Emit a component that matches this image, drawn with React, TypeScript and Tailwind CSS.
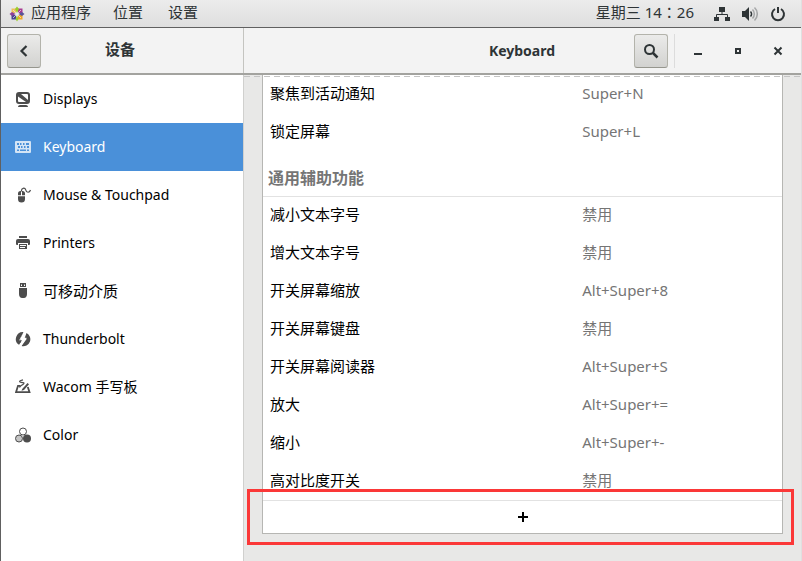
import React, { useState } from 'react';

const iconClass = 'h-4 w-4 shrink-0';

function DisplaysIcon() {
  return (
    <svg viewBox="0 0 16 16" className={iconClass} aria-hidden="true">
      <path
        fill="currentColor"
        fillRule="evenodd"
        d="M4 1h8a3 3 0 0 1 3 3v6a3 3 0 0 1-3 3H4a3 3 0 0 1-3-3V4a3 3 0 0 1 3-3zm0 2a1 1 0 0 0-1 1v6a1 1 0 0 0 1 1h8a1 1 0 0 0 1-1V4a1 1 0 0 0-1-1z"
      />
      <path d="M3 3h3l7 6v2h-2L3 5.500z" fill="currentColor" />
      <path d="M3 16c0-1.300 1-2 2-2h6c1 0 2 .7 2 2z" fill="currentColor" />
    </svg>
  );
}

function KeyboardIcon() {
  return (
    <svg viewBox="0 0 16 16" className={iconClass} aria-hidden="true">
      <path
        fill="currentColor"
        fillRule="evenodd"
        d="M1 2h14a1 1 0 0 1 1 1v10a1 1 0 0 1-1 1H1a1 1 0 0 1-1-1V3a1 1 0 0 1 1-1zm1 2v2h2V4zm3 0v2h1.500V4zm3 0v2h1.500V4zm3 0v2h3V4zM3 7v2h2V7zm3 0v2h1.500V7zm3 0v2h1.500V7zm3 0v2h2V7zM2 10.500v1.500h2v-1.500zm3 0v1.500h6v-1.500zm7 0v1.500h2v-1.500z"
      />
    </svg>
  );
}

function MouseIcon() {
  return (
    <svg viewBox="0 0 16 16" className={iconClass} aria-hidden="true">
      <path
        fill="currentColor"
        d="M3 8.300V6.500A2.500 2.500 0 0 1 5.500 4H6v4.300zM7 8.300V4h.5A2.500 2.500 0 0 1 10 6.500v1.800zM3 9.200h7V12a3.500 3.500 0 0 1-7 0z"
      />
      <path
        d="M6.500 4.500C6 .5 10 .5 10.700 2.800 11.500 6 14.500 6 15.500 3"
        fill="none"
        stroke="currentColor"
        strokeWidth="1.200"
      />
    </svg>
  );
}

function PrinterIcon() {
  return (
    <svg viewBox="0 0 16 16" className={iconClass} aria-hidden="true">
      <path fill="currentColor" d="M4 1h8v2H4z" />
      <path
        fill="currentColor"
        d="M3 4h10a2 2 0 0 1 2 2v3a1 1 0 0 1-1 1h-1V8H3v2H2a1 1 0 0 1-1-1V6a2 2 0 0 1 2-2z"
      />
      <path fill="currentColor" fillRule="evenodd" d="M4 9h8v5H4zm1 1v1h6v-1zm0 2v1h5v-1z" />
    </svg>
  );
}

function RemovableIcon() {
  return (
    <svg viewBox="0 0 16 16" className={iconClass} aria-hidden="true">
      <path fill="currentColor" fillRule="evenodd" d="M5 0h6v4H5zm1 1.500v1.500h1V1.500zm3 0v1.500h1V1.500z" />
      <path fill="currentColor" d="M4 5h8v6c0 2.500-1.500 4-3 4H7c-1.500 0-3-1.500-3-4z" />
    </svg>
  );
}

function ThunderboltIcon() {
  return (
    <svg viewBox="0 0 16 16" className={iconClass} aria-hidden="true">
      <path fill="currentColor" d="M8.500 1A7 7 0 0 0 4 13.800L6.800 9.500H4z" />
      <path fill="currentColor" d="M6.500 14.900 12 7.500H9.500L11.500 1.900A7 7 0 0 1 6.500 14.900z" />
      <path fill="currentColor" d="M8.500 1 4 9.500h2.800L4 13.800z" />
      <path fill="#fff" d="M9 1 4.500 8.800h3L4.500 15l1.500.5L11.500 6.800H8.800L11 1.200z" />
    </svg>
  );
}

function WacomIcon() {
  return (
    <svg viewBox="0 0 16 16" className={iconClass} aria-hidden="true">
      <path d="M5.500 6.800H3L1 13.200h13.500L12.800 8" fill="none" stroke="currentColor" strokeWidth="1.800" />
      <path fill="currentColor" d="m12.500 4 1.500 1.200L9 11l-2.500.8L7.200 10z" />
      <path d="M8 .8C4.500 1.500 3.500 3 6 3.300s4 .5 2.200 1.900S5 6.800 4.500 8.500" fill="none" stroke="currentColor" strokeWidth="1.200" />
    </svg>
  );
}

function ColorIcon() {
  return (
    <svg viewBox="0 0 16 16" className={iconClass} aria-hidden="true">
      <circle cx="8" cy="4.500" r="3.500" fill="none" stroke="currentColor" />
      <circle cx="4" cy="11.500" r="3.500" fill="#c4c4c4" stroke="currentColor" />
      <circle cx="12" cy="11.500" r="4" fill="currentColor" />
    </svg>
  );
}

// Pinwheel of coloured squares with four outer tips
function DistroLogo() {
  return (
    <svg viewBox="0 0 16 16" className={iconClass} aria-hidden="true">
      <path fill="#efc05a" d="M2.500 2.500H7V7H2.500z" />
      <path fill="#a83a92" d="M9 2.500h4.500V7H9z" />
      <path fill="#4a4590" d="M2.500 9H7v4.500H2.500z" />
      <path fill="#efa724" d="M9 9h4.500v4.500H9z" />
      <path fill="#9ccd2a" d="m8 .5 2 2.500-2 4-2-4zM8 15.500 6.500 13 8 9.500 9.500 13z" />
      <path fill="#8d3f97" d="m.5 8 2.500-2 3.500 2L3 10z" />
      <path fill="#5a5599" d="M15.500 8 13 6 9.500 8l3.500 2z" />
      <path stroke="#eee" strokeWidth="0.700" d="m4 4 8 8M12 4l-8 8" />
      <circle cx="8" cy="8" r="1" fill="#eee" />
    </svg>
  );
}

const panels = [
  { name: 'Displays', size: 'text-sm', Icon: DisplaysIcon },
  { name: 'Keyboard', size: 'text-sm', Icon: KeyboardIcon },
  { name: 'Mouse & Touchpad', size: 'text-sm', Icon: MouseIcon },
  { name: 'Printers', size: 'text-sm', Icon: PrinterIcon },
  { name: '可移动介质', size: 'text-[15px]', Icon: RemovableIcon },
  { name: 'Thunderbolt', size: 'text-sm', Icon: ThunderboltIcon },
  { name: 'Wacom 手写板', size: 'text-sm', Icon: WacomIcon },
  { name: 'Color', size: 'text-sm', Icon: ColorIcon },
];

const systemShortcuts = [
  { action: '聚焦到活动通知', keys: 'Super+N' },
  { action: '锁定屏幕', keys: 'Super+L' },
];

const accessShortcuts = [
  { action: '减小文本字号', keys: '禁用' },
  { action: '增大文本字号', keys: '禁用' },
  { action: '开关屏幕缩放', keys: 'Alt+Super+8' },
  { action: '开关屏幕键盘', keys: '禁用' },
  { action: '开关屏幕阅读器', keys: 'Alt+Super+S' },
  { action: '放大', keys: 'Alt+Super+=' },
  { action: '缩小', keys: 'Alt+Super+-' },
  { action: '高对比度开关', keys: '禁用' },
];

function ShortcutRow({ action, keys }: { action: string; keys: string }) {
  return (
    <tr className="h-[38px]">
      <td className="w-[61.5%] pb-0.5 pl-[7px] text-[15px] text-black">{action}</td>
      <td className="pb-0.5 text-[15px] text-[#757575]">{keys}</td>
    </tr>
  );
}

function TopBar() {
  return (
    <div className="flex h-7 items-center justify-between border-b border-[#606060] bg-linear-to-b from-[#ececec] to-[#dedede] pr-[15px] pl-2 text-[15px]">
      <nav className="flex items-center gap-[22px]">
        <button className="flex items-center gap-1.5">
          <DistroLogo />
          <span className="pb-0.5">应用程序</span>
        </button>
        <button className="pb-0.5">位置</button>
        <button className="pb-0.5 pl-[3px]">设置</button>
      </nav>
      <div className="flex items-center gap-5">
        <span className="pb-0.5">
          星期三 14<span className="font-['Noto_Sans_CJK_TC',sans-serif]" lang="zh-TW">：</span>26
        </span>
        <button className="flex items-center gap-3" aria-label="System menu">
          <svg viewBox="0 0 16 16" className={iconClass} aria-hidden="true">
            <path fill="currentColor" d="M5 1h6v5H5zM0 11h5v4H0zM11 11h5v4h-5z" />
            <path d="M8 6v2.500M2.500 11V8.500h11V11" fill="none" stroke="currentColor" />
          </svg>
          <svg viewBox="0 0 16 16" className={iconClass} aria-hidden="true">
            <path fill="currentColor" d="M0 5h3l4-4v14l-4-4H0z" />
            <path d="M8.500 5.500a3.500 3.500 0 0 1 0 5" fill="none" stroke="currentColor" strokeWidth="1.500" />
            <path d="M10.500 3.500a6.500 6.500 0 0 1 0 9M12.500 1.500a9 9 0 0 1 0 13" fill="none" stroke="currentColor" strokeWidth="1.500" opacity="0.350" />
          </svg>
          <svg viewBox="0 0 16 16" className={iconClass} aria-hidden="true">
            <path d="M5 3a6 6 0 1 0 6 0M8 1v6" fill="none" stroke="currentColor" strokeWidth="2" />
          </svg>
        </button>
      </div>
    </div>
  );
}

function HeaderBar() {
  const raised =
    'flex h-[34px] w-[34px] items-center justify-center rounded-[3px] border border-[#b3b3ab] border-b-[#96968e] bg-linear-to-b from-[#ebebea] to-[#d2d2d0]';

  return (
    <header className="flex h-[47px] border-b-2 border-[#a3a39f] bg-[#f3f3f3] text-[15px] font-bold">
      <div className="flex w-[243px] shrink-0 items-center border-r border-[#c4c4c0] pl-1.5">
        <button className={raised} aria-label="Back">
          <svg viewBox="0 0 16 16" className={iconClass} aria-hidden="true">
            <path d="M10.500 3 5.500 8l5 5" fill="none" stroke="currentColor" strokeWidth="2.200" />
          </svg>
        </button>
        <h2 className="flex-1 pr-11 pb-0.5 text-center">设备</h2>
      </div>
      <div className="flex flex-1 items-center">
        <h1 className="flex-1 pl-[166px] text-center text-sm">Keyboard</h1>
        <button className={raised} aria-label="Search">
          <svg viewBox="0 0 16 16" className={iconClass} aria-hidden="true">
            <circle cx="6.500" cy="6.500" r="4.500" fill="none" stroke="currentColor" strokeWidth="2" />
            <path d="m10 10 4.500 4.500" stroke="currentColor" strokeWidth="2.500" />
          </svg>
        </button>
        <div className="ml-1.5 flex h-[34px] items-center gap-6 border-l border-[#dcdcdc] pr-[15px] pl-[15px]">
          <button aria-label="Minimize">
            <svg viewBox="0 0 16 16" className={iconClass} aria-hidden="true">
              <path fill="currentColor" d="M4 10h8v2H4z" />
            </svg>
          </button>
          <button aria-label="Maximize">
            <svg viewBox="0 0 16 16" className={iconClass} aria-hidden="true">
              <path d="M6 6h4v4H6z" fill="none" stroke="currentColor" strokeWidth="2" />
            </svg>
          </button>
          <button aria-label="Close">
            <svg viewBox="0 0 16 16" className={iconClass} aria-hidden="true">
              <path d="m4.500 4.500 7 7M11.500 4.500l-7 7" stroke="currentColor" strokeWidth="2" />
            </svg>
          </button>
        </div>
      </div>
    </header>
  );
}

export default function App() {
  const [active, setActive] = useState('Keyboard');

  return (
    <div className="flex min-h-screen flex-col border-r border-l border-r-[#e0e0e0] border-l-[#606060] bg-white font-['Noto_Sans','Noto_Sans_CJK_SC',sans-serif] text-[#2e3436]">
      <TopBar />
      <HeaderBar />

      <div className="flex flex-1">
        {/* Sidebar */}
        <nav className="w-[243px] shrink-0 border-r border-[#d0d0ce] bg-white">
          {panels.map(({ name, size, Icon }) => (
            <a
              key={name}
              href="#"
              onClick={(e) => {
                e.preventDefault();
                setActive(name);
              }}
              className={`flex h-12 items-center gap-3 pl-3.5 ${size} ${
                active === name ? 'bg-[#4a90d9] text-white' : 'text-black'
              }`}
            >
              <span className={active === name ? 'text-[#d3e4f5]' : 'text-[#4d4d4d]'}>
                <Icon />
              </span>
              {name}
            </a>
          ))}
        </nav>

        {/* Shortcut list */}
        <main className="relative flex-1 bg-[#e8e8e7] px-[18px] pb-6">
          <div className="absolute inset-x-0 top-px h-px bg-[repeating-linear-gradient(90deg,#c4c4c4_0_6px,transparent_6px_10px)]" />
          <div className="border border-t-0 border-[#b6b6b3] bg-white">
            <table className="w-full table-fixed border-collapse text-left">
              <tbody>
                {systemShortcuts.map((s) => (
                  <ShortcutRow key={s.action} {...s} />
                ))}
                <tr className="h-[45px] border-b border-[#e2e2e2]">
                  <th colSpan={2} className="pt-2.5 pl-[5px] text-base font-bold text-[#757575]">
                    通用辅助功能
                  </th>
                </tr>
                {accessShortcuts.map((s) => (
                  <ShortcutRow key={s.action} {...s} />
                ))}
              </tbody>
            </table>
            <div className="relative border-t border-[#e2e2e2]">
              <button className="flex h-8 w-full items-center justify-center text-black" aria-label="Add shortcut">
                <svg viewBox="0 0 16 16" className={iconClass} aria-hidden="true">
                  <path fill="currentColor" d="M7 3h2v4h4v2H9v4H7V9H3V7h4z" />
                </svg>
              </button>
              {/* Callout around the add button */}
              <div className="pointer-events-none absolute -top-3 -right-3 -bottom-3 -left-4 border-3 border-[#fb3838]" />
            </div>
          </div>
        </main>
      </div>
    </div>
  );
}
